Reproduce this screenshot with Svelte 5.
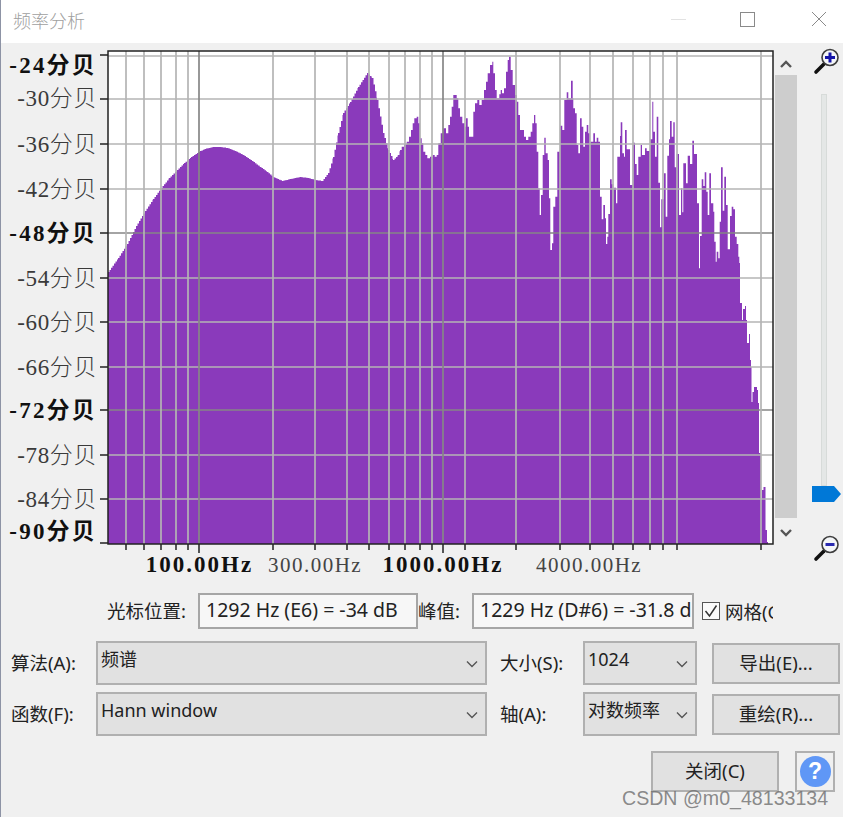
<script>
  const hLines = [[56,0],[99,0],[144,0],[189,0],[233,1],[278,0],[322,0],[367,0],[410,1],[455,0],[499,0]];
  const vLines = [[126,0],[144,0],[161,0],[176,0],[188,0],[199,1],[273,0],[315,0],[347,0],[369,0],[389,0],[405,0],[420,0],[432,0],[443,1],[465,0],[516,0],[560,0],[590,0],[613,0],[633,0],[650,0],[663,0],[677,0],[761,0]];
  const yLabels = [['-24分贝',65,1,55],['-30分贝',98,0,99],['-36分贝',144,0,144],['-42分贝',189,0,189],['-48分贝',233,1,233],['-54分贝',278,0,278],['-60分贝',322,0,322],['-66分贝',367,0,367],['-72分贝',410,1,410],['-78分贝',455,0,455],['-84分贝',499,0,499],['-90分贝',531,1,543]];
  const xLabels = [['100.00Hz',199.500,1],['300.00Hz',315,0],['1000.00Hz',443,1],['4000.00Hz',589,0]];
  const curve = [[108,272],[118,258],[127,244],[136,226],[145,211],[153,199],[161,188],[169,178],[177,170],[184,163],[191,157],[200,151],[206,148.500],[213,147],[220,147],[227,148],[235,151],[243,155],[252,161],[260,167],[267,172],[273,177],[282,181],[290,179],[300,177],[308,178],[315,180],[322,181],[328,173],[333,157],[338,133],[343,113],[350,102],[358,87],[367,73],[372,78],[377,100],[383,133],[388,150],[393,160],[398,155],[400,150]];
  const partA = [[0,285],[5,275],[12,268],[20,260],[27,245],[33,225],[38,205],[43,190],[50,185],[55,205],[60,250],[65,265],[70,290],[76,300],[82,310],[90,305],[98,300],[104,305],[110,300],[115,265],[122,235],[130,220],[138,235],[145,210],[150,185],[155,155],[160,120],[170,130],[175,160],[180,185],[187,205],[195,215],[198,190],[203,215],[207,245],[215,245],[220,170],[225,145],[232,135],[238,150],[245,135],[252,105],[258,80],[263,55],[270,30],[277,20],[280,55],[285,105],[290,130],[298,118],[302,105],[306,115],[312,100],[318,50],[323,15],[327,5],[332,45],[338,90],[345,120],[350,140],[355,180],[360,225],[367,225],[372,245],[378,255],[385,245],[392,230],[397,205],[402,180],[406,205],[410,290],[415,400],[419,480],[423,420],[428,300],[433,248],[437,295],[443,315],[447,430],[451,585],[456,565],[460,455],[466,425],[472,290],[480,212],[487,225],[493,135],[500,112],[505,130],[513,77],[518,130]].map(([x,y]) => [400 + x/3, 55 + y/3]);
  const partB = [[10,55],[15,70],[20,165],[25,190],[30,85],[35,110],[40,170],[45,125],[50,105],[55,130],[60,155],[70,130],[75,155],[80,143],[85,155],[90,320],[95,388],[100,345],[105,385],[108,462],[112,440],[115,372],[120,268],[125,283],[130,293],[138,340],[142,200],[150,138],[152,97],[157,190],[162,200],[165,120],[170,178],[180,285],[188,158],[195,222],[200,255],[205,200],[212,165],[216,195],[225,175],[230,183],[240,148],[247,35],[250,125],[255,200],[260,80],[265,278],[270,412],[274,328],[282,250],[287,380],[292,197],[297,148],[300,93],[305,140],[310,97],[314,232],[320,192],[327,375],[333,295],[337,367],[340,220],[348,280],[353,197],[360,222],[367,152],[372,192],[381,340],[387,535],[390,438],[395,268],[400,288],[404,247],[409,305],[413,375],[418,250],[423,340],[430,365],[433,455],[437,515],[440,485],[445,505],[449,395],[453,232],[458,362],[463,260],[468,345],[473,478],[480,378],[485,350],[490,358],[495,440],[500,462],[505,500]].map(([x,y]) => [570 + x/3, 90 + y/3]);
  const partC = [[739.300,263],[740,303],[742,320],[743,309],[745,306],[746,320],[747,343],[749,334],[750,360],[751,367],[751.500,402],[752.500,392],[754,387],[757,390],[758,403],[759,453],[761,500],[762,490],[763.500,487],[765.500,530],[767,542]];

  function sampleCurve() {
    const out = [];
    for (let i = 0; i < curve.length - 1; i++) {
      const [x0, y0] = curve[i];
      const [x1, y1] = curve[i + 1];
      for (let x = x0; x < x1; x += 1.500) {
        const t = (x - x0) / (x1 - x0);
        out.push([x, y0 + (y1 - y0) * t]);
      }
    }
    return out;
  }

  const steps = [...sampleCurve(), ...partA, ...partB, ...partC];
  let spectrum = 'M108 544';
  steps.forEach(([x, y], i) => {
    const next = i + 1 < steps.length ? steps[i + 1][0] : 768;
    spectrum += ` V${y.toFixed(1)} H${next.toFixed(1)}`;
  });
  spectrum += ' V544 Z';
</script>

{#snippet lens(minus)}
  <svg class="lens" viewBox="0 0 28 28" width="28" height="28">
    <path d="M3 25 L11 17" stroke="#111" stroke-width="3.600" stroke-linecap="round"/>
    <circle cx="17" cy="10.500" r="8" fill="#f4f6f8" stroke="#3d3d3d" stroke-width="1.600"/>
    {#if minus}
      <path d="M12.500 10.500 H21.500" stroke="#2a2ab0" stroke-width="3"/>
    {:else}
      <path d="M12 10.500 H22 M17 5.500 V15.500" stroke="#1414a8" stroke-width="3"/>
    {/if}
  </svg>
{/snippet}

{#snippet chevron()}
  <svg class="chev" viewBox="0 0 14 10" width="14" height="10"><path d="M2 2.500 L7 7.500 L12 2.500" fill="none" stroke="#555" stroke-width="1.400"/></svg>
{/snippet}

<div class="win">
  <header class="title">
    <span class="caption">频率分析</span>
    <span class="wbtn min"></span>
    <span class="wbtn max"></span>
    <svg class="wclose" viewBox="0 0 16 16" width="16" height="16"><path d="M1 1 L15 15 M15 1 L1 15" stroke="#8a8a8a" stroke-width="1"/></svg>
  </header>

  <section class="main">
    <svg class="graph" viewBox="0 43 775 535" width="775" height="535">
      <rect x="108" y="51" width="665" height="493" fill="#fff"/>
      <path d={spectrum} fill="#8a3abb"/>
      {#each hLines as [y, major]}
        <line x1="108" x2="773" y1={y} y2={y} class={major ? 'gmajor' : 'gminor'}/>
      {/each}
      {#each vLines as [x, major]}
        <line x1={x} x2={x} y1="51" y2="544" class={major ? 'gmajor' : 'gminor'}/>
        <line x1={x} x2={x} y1="544" y2={major ? 553 : 550} class="tick"/>
      {/each}
      <rect x="108" y="51" width="665" height="493" fill="none" stroke="#222" stroke-width="1.500"/>
      {#each yLabels as [t, y, bold, tickY]}
        <line x1="100" x2="108" y1={tickY} y2={tickY} class="tick"/>
        <text x="97" y={y} class={bold ? 'ylab bold' : 'ylab'}>{t}</text>
      {/each}
      {#each xLabels as [t, x, bold]}
        <text x={x} y="572" class={bold ? 'xlab bold' : 'xlab'}>{t}</text>
      {/each}
    </svg>

    <div class="scroll">
      <svg class="arrow" viewBox="0 0 14 10" width="14" height="10"><path d="M2 8 L7 3 L12 8" fill="none" stroke="#555" stroke-width="2.400"/></svg>
      <div class="track"></div>
      <svg class="arrow" viewBox="0 0 14 10" width="14" height="10"><path d="M2 2 L7 7 L12 2" fill="none" stroke="#555" stroke-width="2.400"/></svg>
    </div>

    <div class="zoomcol">
      {@render lens(false)}
      <div class="slider">
        <div class="rail"></div>
        <svg class="thumb" viewBox="0 0 29 16" width="29" height="16"><path d="M0 0 H22 L29 8 L22 16 H0 Z" fill="#0078d7"/></svg>
      </div>
      {@render lens(true)}
    </div>
  </section>

  <section class="readout">
    <span class="rlabel">光标位置:</span>
    <div class="field first">1292 Hz (E6) = -34 dB</div>
    <span class="rlabel peak">峰值:</span>
    <div class="field second"><span>1229 Hz (D#6) = -31.8 dB</span></div>
    <label class="grid-check">
      <span class="box"><svg viewBox="0 0 18 18" width="18" height="18"><path d="M3.500 9 L7.500 14 L14.500 3.500" fill="none" stroke="#333" stroke-width="1.500"/></svg></span>
      <span class="ctext">网格(G)</span>
    </label>
  </section>

  <section class="form">
    <span class="flabel">算法(A):</span>
    <div class="combo">频谱{@render chevron()}</div>
    <span class="flabel">大小(S):</span>
    <div class="combo">1024{@render chevron()}</div>
    <div class="btn">导出(E)...</div>

    <span class="flabel">函数(F):</span>
    <div class="combo">Hann window{@render chevron()}</div>
    <span class="flabel">轴(A):</span>
    <div class="combo">对数频率{@render chevron()}</div>
    <div class="btn">重绘(R)...</div>
  </section>

  <footer class="foot">
    <div class="btn close">关闭(C)</div>
    <div class="help"><span class="q">?</span></div>
  </footer>

  <div class="mark">CSDN @m0_48133134</div>
</div>

<style>
  :global(body) { margin: 0; }
  .win {
    position: relative;
    width: 843px;
    height: 817px;
    box-sizing: border-box;
    overflow: hidden;
    background: #f0f0f0;
    color: #222;
    font-family: "Noto Sans", "Noto Sans CJK SC", sans-serif;
    font-size: 18px;
    box-shadow: inset 1px 0 0 #8d93a5;
  }
  .title {
    height: 43px;
    display: flex;
    align-items: center;
    background: #fff;
    margin-left: 1px;
  }
  .caption {
    margin-left: 12px;
    margin-top: -4px;
    flex: 1;
    font-size: 18px;
    color: #a0a0a0;
    font-family: "Noto Sans CJK SC", sans-serif;
    font-weight: 300;
  }
  .wbtn { display: block; box-sizing: border-box; }
  .min { width: 15px; height: 1px; background: #e2e2e2; margin-right: 54px; margin-top: -5px; }
  .max { width: 15px; height: 15px; border: 1px solid #8a8a8a; margin-right: 56px; margin-top: -5px; }
  .wclose { margin-right: 16px; margin-top: -5px; }

  .main { display: flex; height: 535px; }
  .graph { display: block; flex: none; }
  .gminor { stroke: #b4b4b4; stroke-width: 1.700; }
  .gmajor { stroke: #868686; stroke-width: 1.700; }
  .tick { stroke: #222; stroke-width: 1.500; }
  .ylab {
    font-family: "Liberation Serif", "Noto Sans CJK SC", serif;
    font-size: 23px;
    fill: #3a3a3a;
    text-anchor: end;
    dominant-baseline: central;
    font-weight: 300;
    letter-spacing: 0.600px;
  }
  .xlab {
    font-family: "Liberation Serif", serif;
    font-size: 21px;
    fill: #444;
    text-anchor: middle;
    letter-spacing: 1.500px;
  }
  .ylab.bold, .xlab.bold { font-weight: 700; fill: #111; }
  .ylab.bold { letter-spacing: 2.200px; }
  .xlab.bold { font-size: 23px; letter-spacing: 2px; }

  .scroll {
    width: 22px;
    flex: none;
    display: flex;
    flex-direction: column;
    align-items: center;
  }
  .arrow { margin: 16px 0 6px; flex: none; }
  .track { width: 22px; height: 443px; background: #cdcdcd; flex: none; }
  .scroll .arrow:last-child { margin: 10px 0 0; }

  .zoomcol {
    width: 46px;
    flex: none;
    display: flex;
    flex-direction: column;
    align-items: center;
    padding-top: 4px;
    box-sizing: border-box;
  }
  .slider {
    height: 459px;
    width: 46px;
    display: flex;
    flex-direction: column;
    align-items: center;
    padding-top: 19px;
    box-sizing: border-box;
  }
  .lens { display: block; flex: none; margin-left: 14px; }
  .rail {
    width: 6px;
    height: 392px;
    box-sizing: border-box;
    background: #e4e7e6;
    border: 1px solid #d7dbd9;
    margin-left: 7px;
  }
  .thumb { display: block; margin-left: 13px; flex: none; }

  .readout {
    display: flex;
    align-items: center;
    height: 36px;
    margin-top: 15px;
    padding-left: 107px;
  }
  .rlabel {
    font-size: 18.500px;
    width: 91px;
    flex: none;
    white-space: nowrap;
    padding-bottom: 3px;
  }
  .rlabel.peak { width: 54px; }
  .field {
    box-sizing: border-box;
    height: 36px;
    border: 2px solid #a6a6a6;
    background: #f7f7f7;
    padding: 0 6px 3px;
    display: flex;
    align-items: center;
    overflow: hidden;
    white-space: nowrap;
    font-size: 19.500px;
    flex: none;
  }
  .field.first { width: 220px; }
  .field.second { width: 222px; margin-right: 8px; }
  .grid-check {
    display: flex;
    align-items: center;
    gap: 5px;
    width: 71px;
    overflow: hidden;
    flex: none;
  }
  .box {
    width: 18px;
    height: 18px;
    box-sizing: border-box;
    border: 1px solid #555;
    background: #fafafa;
    flex: none;
    display: block;
  }
  .box svg { display: block; margin: -1px; }
  .ctext { white-space: nowrap; font-size: 18.500px; }

  .form {
    display: grid;
    grid-template-columns: 85px 391px 96px 114px 128px;
    grid-auto-rows: 44px;
    row-gap: 7px;
    margin-top: 12px;
    padding-left: 11px;
    align-items: center;
  }
  .flabel { font-size: 18.500px; white-space: nowrap; padding-bottom: 3px; }
  .form > :nth-child(3), .form > :nth-child(8) { padding-left: 13px; }
  .combo {
    box-sizing: border-box;
    height: 44px;
    border: 2px solid #b0b0b0;
    background: #e1e1e1;
    padding: 4px 3px;
    position: relative;
    line-height: 24px;
    font-size: 18px;
    white-space: nowrap;
  }
  .chev { position: absolute; right: 6px; top: 16px; }
  .btn {
    box-sizing: border-box;
    height: 41px;
    border: 2px solid #b0b0b0;
    background: #e1e1e1;
    display: flex;
    align-items: center;
    justify-content: center;
    font-size: 18.500px;
    padding-bottom: 3px;
  }
  .form .btn { margin-left: 15px; width: 128px; }

  .foot {
    display: flex;
    justify-content: flex-end;
    gap: 16px;
    margin-top: 15px;
    padding-right: 8px;
  }
  .close { width: 128px; }
  .help {
    box-sizing: border-box;
    width: 40px;
    height: 41px;
    border: 2px solid #b0b0b0;
    display: flex;
    align-items: center;
    justify-content: center;
  }
  .q {
    width: 31px;
    height: 31px;
    border-radius: 50%;
    background: #5f97f6;
    color: #fff;
    font-weight: 700;
    font-size: 23px;
    line-height: 31px;
    text-align: center;
    font-family: "Liberation Sans", sans-serif;
  }
  .mark {
    position: absolute;
    left: 622px;
    top: 787px;
    font-family: "Liberation Sans", sans-serif;
    font-size: 19.600px;
    line-height: 22px;
    color: rgba(110, 110, 110, 0.8);
    white-space: nowrap;
  }
</style>
